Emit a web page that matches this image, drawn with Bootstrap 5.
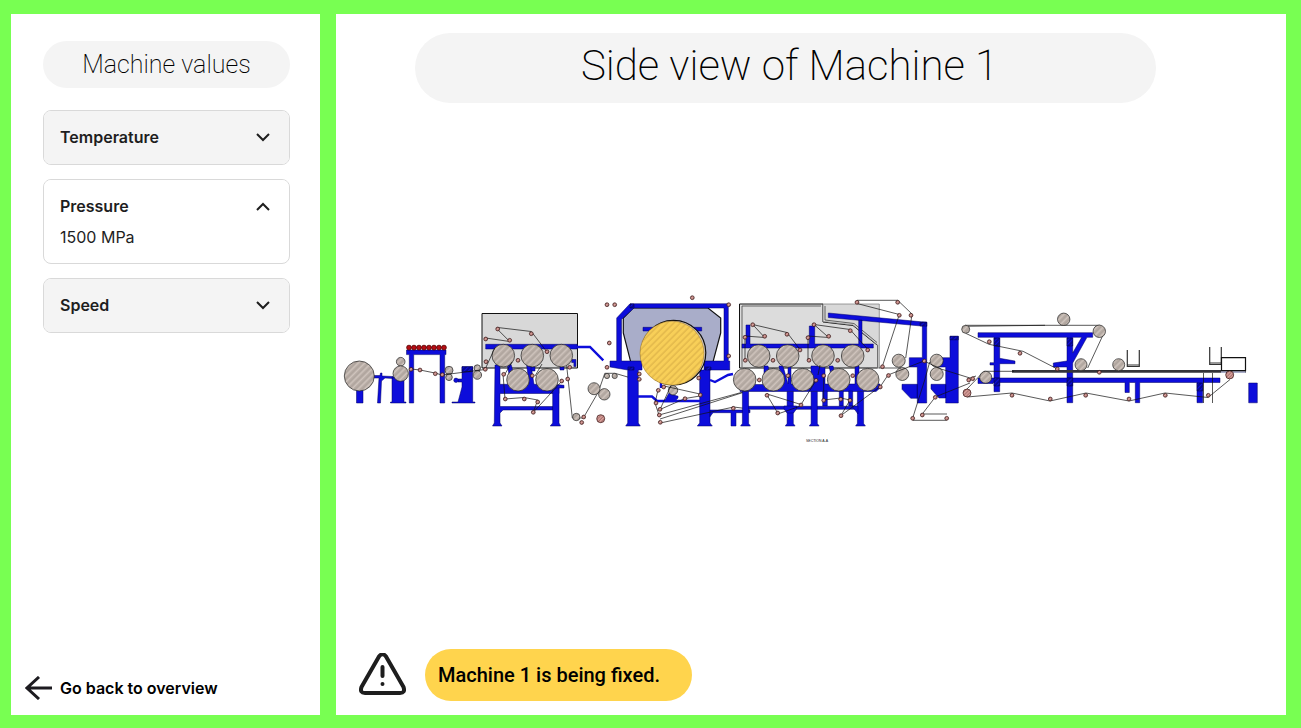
<!DOCTYPE html>
<html lang="en">
<head>
<meta charset="utf-8">
<meta name="viewport" content="width=device-width, initial-scale=1">
<title>Machine 1</title>
<link href="https://cdn.jsdelivr.net/npm/bootstrap@5.3.0/dist/css/bootstrap.min.css" rel="stylesheet">
<style>
body{background:#78ff52;color:#000;font-family:Roboto,"Liberation Sans",sans-serif;font-optical-sizing:none}
.shell{padding:14px 15px 13px 11px;gap:16px}
.side-panel{width:309px;padding:27px 30px 11px 32px}
.pill-title{background:#f4f4f4;font-weight:200}
.side-title{font-size:25px;line-height:47px;margin-bottom:22px}
.value-list{gap:14px;font-family:Inter,sans-serif;color:#1e1e1e}
.value-box{border:1px solid #d9d9d9;border-radius:8px;overflow:hidden}
.value-box button{padding:15px 16px;font-size:16px;line-height:23px;font-weight:600;background:#f4f4f4;color:inherit}
.value-box.opened button{background:#fff}
.value-text{font-size:16px;line-height:22px;padding:0 16px 15px;margin-top:-7px}
.back-link{font:600 16px/32px Inter,sans-serif;color:#000;gap:8px;margin-left:-18px}
.main-panel{padding:19px 0 14px}
.main-title{width:78%;margin-left:79px;padding-left:8px;font-size:42px;line-height:66px;padding-bottom:4px}
.notice{margin-left:23px;gap:19px}
.notice-text{background:#ffd44d;font-size:20px;font-weight:500;line-height:52px;padding:0 32px 0 13px}
.side-title,.main-title,.notice-text{border-radius:36px}
.drawing{padding-bottom:12px}
.plant{display:block;width:100%}
.steel{fill:#0d0ddb;stroke:#000060;stroke-width:.5}
.hatch-steel{fill:url(#steelHatch);stroke:#000040;stroke-width:.5}
.guard{fill:#d8d8d8;stroke:#111;stroke-width:1}
.roll{fill:url(#rollHatch);stroke:#222;stroke-width:.7}
.roll-red{fill:url(#redHatch);stroke:#311;stroke-width:.7}
.web{fill:none;stroke:#111;stroke-width:.7}
.pipe{fill:none;stroke:#0d0ddb;stroke-width:2.4}
</style>
</head>
<body>
<div class="shell d-flex min-vh-100">
  <aside class="side-panel bg-white flex-shrink-0 d-flex flex-column">
    <h2 class="pill-title side-title text-center">Machine values</h2>
    <div class="value-list d-flex flex-column">
      <section class="value-box">
        <button type="button" class="border-0 w-100 d-flex justify-content-between align-items-center" aria-expanded="false">Temperature
          <svg width="20" height="20" viewBox="0 0 20 20" fill="none" stroke="#1e1e1e" stroke-width="2"><path d="M4 6l6 6 6-6"/></svg></button>
      </section>
      <section class="value-box opened">
        <button type="button" class="border-0 w-100 d-flex justify-content-between align-items-center" aria-expanded="true" aria-controls="pressure">Pressure
          <svg width="20" height="20" viewBox="0 0 20 20" fill="none" stroke="#1e1e1e" stroke-width="2"><path d="M4 13l6-6 6 6"/></svg></button>
        <div id="pressure" class="value-text">1500 MPa</div>
      </section>
      <section class="value-box">
        <button type="button" class="border-0 w-100 d-flex justify-content-between align-items-center" aria-expanded="false">Speed
          <svg width="20" height="20" viewBox="0 0 20 20" fill="none" stroke="#1e1e1e" stroke-width="2"><path d="M4 6l6 6 6-6"/></svg></button>
      </section>
    </div>
    <a href="#" class="back-link mt-auto d-flex align-items-center text-decoration-none">
      <svg width="27" height="24" viewBox="0 0 27 24" fill="none" stroke="#1d1b20" stroke-width="3"><path d="M27 12H2M14 1L2 12l12 11"/></svg>Go back to overview</a>
  </aside>

  <main class="main-panel bg-white flex-grow-1 d-flex flex-column">
    <h1 class="pill-title main-title text-center mb-0">Side view of Machine 1</h1>
    <div class="drawing my-auto">
    <svg class="plant" viewBox="336 290 950 160" role="img" aria-label="Side view of the machine">
      <defs>
        <pattern id="rollHatch" width="4.6" height="4.6" patternUnits="userSpaceOnUse" patternTransform="rotate(45)"><path fill="#cfc4bd" d="M0 0h5v5H0z"/><path d="M1 0v5M2.600 0v5" stroke="#6b605a" stroke-width=".45"/></pattern>
        <pattern id="redHatch" width="2.4" height="2.4" patternUnits="userSpaceOnUse" patternTransform="rotate(45)"><path fill="#dca29d" d="M0 0h3v3H0z"/><path d="M1 0v3" stroke="#6d3a39" stroke-width=".5"/></pattern>
        <pattern id="goldHatch" width="4.6" height="4.6" patternUnits="userSpaceOnUse" patternTransform="rotate(45)"><path fill="#f8cf58" d="M0 0h5v5H0z"/><path d="M1 0v5" stroke="#c89c3c" stroke-width=".7"/></pattern>
        <pattern id="steelHatch" width="3" height="3" patternUnits="userSpaceOnUse" patternTransform="rotate(45)"><path fill="#0d0ddb" d="M0 0h3v3H0z"/><path d="M1 0v3" stroke="#000" stroke-width=".7"/></pattern>
        <circle id="big" class="roll" r="11.3"/>
        <circle id="mid" class="roll" r="6.5"/>
        <circle id="nip" class="roll-red" r="1.9"/>
        <path id="leg" class="steel" d="M-3.1 0H3.1V32l1.8 2.6H-4.9L-3.1 32z"/>
      </defs>

      <!-- unwind stand -->
      <path class="steel" d="M356.5 389h6.5v14h-6.5zM374 375.5h6l.5-2.5h1.5v3l11 .5v2l-8-.5-3.500 3-1 22h-3l1.500-25h-5zM392 377h12v25h2v1h-15.500v-1h1.500z"/>
      <path class="steel" d="M406.500 350H446v4.600h-1.300V403H440v-48.400h-26.300V403h-4.400v-48.400h-2.800z"/>
      <circle class="roll" cx="359.300" cy="376" r="15"/><circle class="roll" cx="400.700" cy="361.700" r="4.300"/><circle class="roll" cx="400.700" cy="373.600" r="7.700"/>
      <path stroke="#500" stroke-width=".8" fill="#b50d14" d="M406.600 347.600a2.400 2.400 0 1 0 4.800 0 2.400 2.400 0 1 0-4.800 0m5 0a2.400 2.400 0 1 0 4.800 0 2.400 2.400 0 1 0-4.800 0m5 0a2.400 2.400 0 1 0 4.800 0 2.400 2.400 0 1 0-4.800 0m5 0a2.400 2.400 0 1 0 4.800 0 2.400 2.400 0 1 0-4.800 0m5 0a2.400 2.400 0 1 0 4.800 0 2.400 2.400 0 1 0-4.800 0m5 0a2.400 2.400 0 1 0 4.800 0 2.400 2.400 0 1 0-4.800 0m5 0a2.400 2.400 0 1 0 4.800 0 2.400 2.400 0 1 0-4.800 0m5 0a2.400 2.400 0 1 0 4.800 0 2.400 2.400 0 1 0-4.800 0"/>
      <path class="steel" d="M462 366.700h10.700V402h2.300v1h-23v-1h6l4-15v-5h-4v-3h4z"/><path class="hatch-steel" d="M462 366.700h10.700v5H462z"/>
      <circle class="steel" cx="456" cy="380.300" r="2.200"/>
      <circle class="roll" cx="449" cy="370.300" r="4"/><circle class="roll" cx="449" cy="377.300" r="3.300"/><circle class="roll" cx="477.300" cy="368" r="3.200"/><circle class="roll" cx="477.300" cy="375" r="4.300"/>

      <!-- first dryer group -->
      <path class="guard" d="M482 313.500h95.500V368H482z"/>
      <path class="steel" d="M485.700 344.300h91.600v4.700h-91.600zM495 365h5v19.300h11l-4-20h4l6 20h12l-4-32h4l5 32h20l10 1v2.700h-5v5.500h-59v13h53v3.500h-50l-3 3v10l2 3h-9.500l1.800-3z"/>
      <path class="steel" d="M552.700 388h6.300v35l1.500 3h-10.300l2.500-3zM531 367h4v4h-4zM560 367h4v3h-4zM571.700 359.500h4.200v7h-2v-4h-2.200z"/>
      <path class="pipe" d="M577 347h13l13.300 13.300"/>
      <use href="#big" x="503.300" y="355.600"/><use href="#big" x="532.300" y="355.600"/><use href="#big" x="561.300" y="355.600"/><use href="#big" x="518" y="379.700"/><use href="#big" x="547" y="379.700"/>
      <path class="web" d="M411 369l9 1 15 3 7 2 43-5.500 10-22M485.700 338l24 3.500-12-12M497.700 327.500l33.600 4L547 352M512 362l-7 12M542 364l-7 12M503 374l2 25 19-1.500 13.700 2.500-4.400 12.300 28.400-31M566.700 366l5.600 52h11l15-26 6.500-18.700H615l24 7"/>
      <circle class="roll" cx="594" cy="388.700" r="6"/><circle class="roll" cx="604.300" cy="394.300" r="5.700"/><circle class="roll" cx="576.300" cy="417" r="3.700"/><circle class="roll-red" cx="600.700" cy="418.700" r="4"/><circle class="roll" cx="607" cy="376" r="2.600"/><circle class="roll" cx="614.700" cy="376" r="2.600"/>

      <!-- yankee cylinder -->
      <path fill="#a9adc9" stroke="#111" stroke-width="1.200" d="M633 308h75l12.700 10v15L713 362h-82.300l-7.400-29v-15z"/>
      <path class="steel" d="M630 303.700h98.300V361h1.400v9H710v53l2.300 3h-15l2.400-3v-53h4.300v-9h20v-53h-90l-12.500 11.500V361H642v9h-3.700v53l2 3h-14.600l2-3v-53L610 367v-6h6.700v-43z"/>
      <path class="hatch-steel" d="M628 367h6v3h-6zM705 367h6v3h-6zM630 304h4v4h-4z"/>
      <path class="steel" d="M643 327.300h58.700v3.700H643zM664 402l5-9 8 3h1v2l-4 4zM710 410h40v2.700h-14V426h-5v-13.300h-18l-3 4z"/>
      <path class="pipe" d="M638 396.500h14l5 4.500h43M710 380l5 2 13-7 5-1M661 382v6"/>
      <circle cx="673.500" cy="352.700" r="32.300" fill="#d2c9c4" stroke="#111" stroke-width="1.200"/>
      <circle cx="672" cy="353.200" r="32" fill="url(#goldHatch)" stroke="#98711f" stroke-width=".5"/>
      <circle class="roll" cx="673" cy="390.300" r="4.700"/>
      <path class="web" d="M664 386l36 8M658 390l-3 13 4 12 84-23M700 396l-15 2.500-25 11 11-24M660 419l83-26.500M660.300 423l73.400-16 16 2"/>

      <!-- second dryer group -->
      <path class="guard" fill-opacity=".9" d="M739.500 304H823v18l30 3.500 24.700 20V368H739.500z"/>
      <path fill="#d8d8d8" stroke="#777" stroke-width=".7" d="M823 304h56.300v64H877.700v-23L853 325l-30-3.500z"/>
      <path fill="none" stroke="#444" stroke-width=".8" d="M742 367v-61h79M825 306v14l29 3.500 23 19"/>
      <path class="steel" d="M828.300 313l98.400 9.300v4.200l-98.400-9zM742 344h4v-19h4v19h59.300v-18h5.400v18h44v-24h3.300v24h11.300v4H742z"/>
      <path class="steel" d="M764 366h4l5 18h9l-3-18h4l5 18v-18h3v18h20v-18h14v18h8l-4-18h4l5 18h17v-18h4v12l14 6h7v4l-4 3.500H740v-7h24z"/>
      <path class="steel" d="M748 406.300h110v3H748zM822.700 391h4.600v15h-4.600zM839.300 391h4v15h-4zM848.700 391h4v15h-4z"/>
      <use href="#leg" x="745.500" y="391.400"/><use href="#leg" x="790.200" y="391.400"/><use href="#leg" x="814.200" y="391.400"/><use href="#leg" x="860.500" y="391.400"/>
      <path class="steel" d="M784 406h12.500v3l-3 4H787l-3-4zM852 406h6v8z"/>
      <use href="#big" x="758.700" y="356"/><use href="#big" x="787.700" y="356"/><use href="#big" x="823" y="356"/><use href="#big" x="852.700" y="356"/><use href="#big" x="744.700" y="379.700"/><use href="#big" x="773.300" y="379.700"/><use href="#big" x="802.700" y="379.700"/><use href="#big" x="838.700" y="379.700"/><use href="#big" x="867.700" y="379.700"/>
      <path class="web" d="M745 360v-24l19.700 1.500-12-13 34.300 8 13 17M808 360v-24l20.700 1.500-14.700-13 36 5 18 20M767 395l10.700 18M767 394l34 10.500 15-24M777.700 414l23-8M823.700 376v24l17-2 9.300 2-9 15.500 39.300-29M820 365l-2 10"/>

      <!-- threading arms and presses -->
      <path class="steel" d="M922.300 322h4.400v81h-9.400v-36h-8v-9.300h13zM902 384.300h15.300v14h-6.600l-8.700-9zM950 336.300h8.300V403h-12.600v-36H937v-9.300h13zM931 384.300h14.700V398H939l-8-9z"/>
      <path class="hatch-steel" d="M920 322.500h6.700v3.500H920zM950 336.300h8.300v3.500H950z"/>
      <use href="#mid" x="898.700" y="360.700"/><use href="#mid" x="902.300" y="374"/><use href="#mid" x="936.700" y="360.700"/><use href="#mid" x="936.700" y="374"/>
      <path class="web" d="M857 300.300h40.700L912 314l-6.300 44M857 303.500l42.300 11-17 52M879 368h22M880 387l8-12 36-14 17 8 29 9 6-2M912.700 418l12-38 5-18M935.300 397l-13 17h24.700M912.700 420.300h34M935 397l35-14"/>

      <!-- forming section -->
      <path class="steel" d="M978 332.700h114.700v4.600H1087L1072.700 363v39.700H1067V367h-13.700v-4l13.700-2v-23.700h-67.300v21l15.300 2.700v2.700h-15.300v28H994V365h-4v-2.300h4v-25.400h-16zM1072.700 337.300V353l9-15.700z" fill-rule="evenodd"/>
      <path class="steel" d="M978 378h242v4.500h-17.300v20.200H1197v-20.200h-57.300v20.200h-4.400v-20.200h-6v10H1125v-10H993v1H978zM1248.700 383h8.600v19.800h-8.600z"/>
      <path class="hatch-steel" d="M994 338h5.700v8H994zM1067 338h5.700v8h-5.700zM994 378h5.700v8H994zM1067 378h5.700v8h-5.700zM1197 383h5.700v8H1197z"/>
      <path fill="#33333a" d="M1012 370h234v2.800h-234z"/><path fill="#a9adc9" d="M1221 371h24.500v2H1221z"/>
      <path fill="none" stroke="#333" stroke-width="1.200" d="M1127.300 350v16.500h12V350M1209.700 347v17.500h11.600V347M1127.300 365h12M1209.700 363h11.600"/>
      <path fill="#fff" stroke="#111" stroke-width="1.200" d="M1221.500 357.700h24v13h-24z"/>
      <path class="web" d="M1203.500 373v30M1212.500 373v30M965 325.300h135M965 326.300l80-1M1103 335l-15.300 33M965.700 333.300l23.300 11 34 7 34 17.500M967 389l17-17.700h30M967 397l45-4 38 8 36-8 43 8 36-8 43 4.500 22-18"/>
      <circle class="roll" cx="965.700" cy="329.300" r="4"/><circle class="roll" cx="1063.700" cy="319.300" r="6.200"/><circle class="roll" cx="1099.300" cy="331.300" r="6.200"/><circle class="roll" cx="1081" cy="364.700" r="6"/><circle class="roll" cx="1118.700" cy="364.700" r="6"/><circle class="roll" cx="985.700" cy="377.300" r="6"/><circle class="roll-red" cx="967" cy="393" r="4"/><circle class="roll-red" cx="1229.700" cy="374.900" r="4"/>

      <!-- guide rolls -->
      <use href="#nip" x="411" y="369.300"/><use href="#nip" x="420" y="370"/><use href="#nip" x="435.300" y="373.700"/><use href="#nip" x="442.300" y="374.700"/><use href="#nip" x="485.300" y="369.300"/>
      <use href="#nip" x="497.700" y="329"/><use href="#nip" x="509.700" y="340.300"/><use href="#nip" x="485.700" y="339"/><use href="#nip" x="531.300" y="333.700"/><use href="#nip" x="547" y="351.700"/><use href="#nip" x="518" y="360.300"/><use href="#nip" x="486" y="361.700"/><use href="#nip" x="503.700" y="374.300"/><use href="#nip" x="532.300" y="375.700"/><use href="#nip" x="561.700" y="381"/><use href="#nip" x="567.700" y="379"/><use href="#nip" x="505.300" y="399"/><use href="#nip" x="524.300" y="399"/><use href="#nip" x="537.700" y="402"/><use href="#nip" x="533.300" y="412.300"/><use href="#nip" x="569.700" y="367.300"/><use href="#nip" x="583.700" y="417"/><use href="#nip" x="581.700" y="422.500"/>
      <use href="#nip" x="607" y="304.700"/><use href="#nip" x="614.700" y="304.700"/><use href="#nip" x="609.300" y="343"/><use href="#nip" x="607" y="367.300"/><use href="#nip" x="692.300" y="297.700"/><use href="#nip" x="728.700" y="304.700"/><use href="#nip" x="728.700" y="356"/><use href="#nip" x="698.700" y="378"/><use href="#nip" x="700.300" y="395"/><use href="#nip" x="685" y="398.700"/><use href="#nip" x="658.300" y="390.300"/><use href="#nip" x="663.700" y="387"/><use href="#nip" x="656" y="403"/><use href="#nip" x="660" y="409.300"/><use href="#nip" x="659.300" y="415"/><use href="#nip" x="660.300" y="422.300"/><use href="#nip" x="639.300" y="374"/><use href="#nip" x="639.300" y="379.300"/><use href="#nip" x="733.300" y="408.300"/>
      <use href="#nip" x="752.700" y="324.700"/><use href="#nip" x="764.700" y="336.300"/><use href="#nip" x="745" y="337.300"/><use href="#nip" x="787" y="334.300"/><use href="#nip" x="800" y="350"/><use href="#nip" x="773" y="360.300"/><use href="#nip" x="745.300" y="360.300"/><use href="#nip" x="814" y="324.700"/><use href="#nip" x="828.700" y="336.300"/><use href="#nip" x="808" y="337.700"/><use href="#nip" x="850.300" y="330.700"/><use href="#nip" x="867.700" y="350"/><use href="#nip" x="837.700" y="360.300"/><use href="#nip" x="809" y="360.300"/><use href="#nip" x="759.300" y="380"/><use href="#nip" x="788" y="375.700"/><use href="#nip" x="816" y="380.300"/><use href="#nip" x="823.700" y="375.700"/><use href="#nip" x="852.700" y="375.700"/><use href="#nip" x="767" y="395.300"/><use href="#nip" x="777.700" y="413"/><use href="#nip" x="801" y="405"/><use href="#nip" x="823.700" y="400.300"/><use href="#nip" x="840.700" y="399.300"/><use href="#nip" x="850" y="400.300"/><use href="#nip" x="841" y="415.700"/><use href="#nip" x="880.300" y="387"/>
      <use href="#nip" x="857" y="302.300"/><use href="#nip" x="897.700" y="302.300"/><use href="#nip" x="899.300" y="315.300"/><use href="#nip" x="911" y="315.300"/><use href="#nip" x="882.500" y="366.700"/><use href="#nip" x="888.500" y="375.500"/><use href="#nip" x="924.300" y="361"/><use href="#nip" x="935.300" y="397.300"/><use href="#nip" x="922.300" y="415"/><use href="#nip" x="946.700" y="418.300"/><use href="#nip" x="912.700" y="418.300"/>
      <use href="#nip" x="968.700" y="380"/><use href="#nip" x="972.700" y="378.700"/><use href="#nip" x="989.300" y="341.700"/><use href="#nip" x="1020" y="353.300"/><use href="#nip" x="1057.300" y="369"/><use href="#nip" x="1099.300" y="372.300"/><use href="#nip" x="1012" y="395.300"/><use href="#nip" x="1050.300" y="399"/><use href="#nip" x="1085.700" y="395.300"/><use href="#nip" x="1129" y="399"/><use href="#nip" x="1165.300" y="395.300"/><use href="#nip" x="1208.300" y="395.300"/>
      <text x="806" y="442" font-family="Liberation Sans, sans-serif" font-size="3.500" fill="#222">SECTION A-A</text>
    </svg>
    </div>
    <div class="notice d-flex align-items-center" role="status">
      <svg width="47" height="44" viewBox="0 0 47 44" fill="none" stroke="#1e1e1e" stroke-width="4" stroke-linecap="round" stroke-linejoin="round" aria-hidden="true"><path d="M20 3.500Q23.500-1 27 3.500L44.500 34Q46.500 40 41 40H6Q.5 40 2.500 34Z"/><path d="M23.500 14v9M23.500 31v.1"/></svg>
      <span class="notice-text">Machine 1 is being fixed.</span>
    </div>
  </main>
</div>
<script src="https://cdn.jsdelivr.net/npm/bootstrap@5.3.0/dist/js/bootstrap.bundle.min.js"></script>
</body>
</html>
